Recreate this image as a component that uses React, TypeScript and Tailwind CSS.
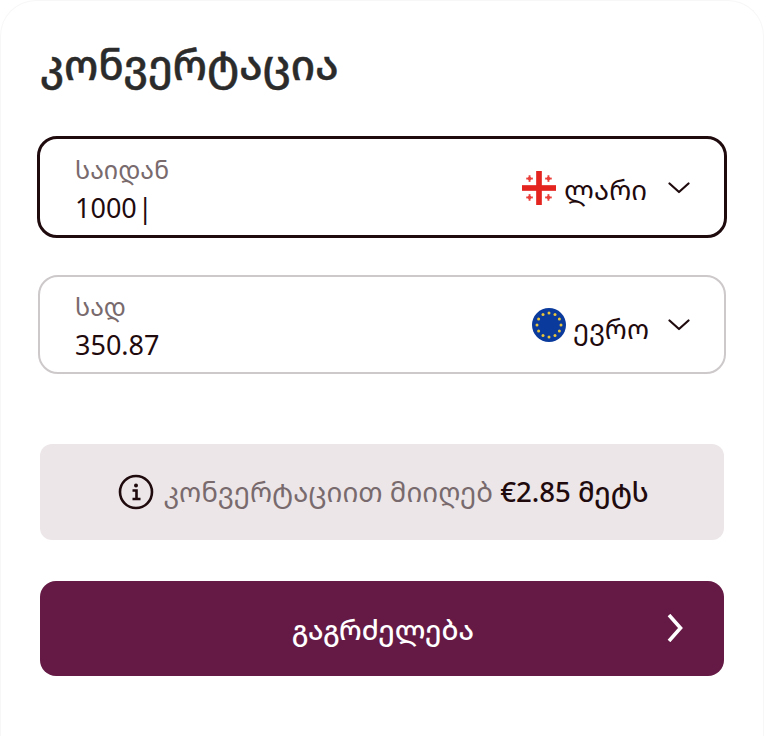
const font = "[font-family:'Noto_Sans','Noto_Sans_Georgian','DejaVu_Sans',sans-serif]";

function GeFlag() {
  return (
    <svg width="34" height="36" viewBox="0 0 36 38" className="shrink-0">
      <rect x="15" y="1" width="6" height="36" fill="#e3241f" />
      <rect x="0" y="16" width="36" height="6" fill="#e3241f" />
      {[[8, 9], [28, 9], [8, 29], [28, 29]].map(([x, y]) => (
        <g key={`${x}-${y}`} fill="#ea3f3a">
          <rect x={x - 1} y={y - 3.5} width="2" height="7" />
          <rect x={x - 3.5} y={y - 1} width="7" height="2" />
          <rect x={x - 1.5} y={y - 1.5} width="3" height="3" />
        </g>
      ))}
    </svg>
  );
}

function EuFlag() {
  const stars = Array.from({ length: 12 }, (_, i) => {
    const a = (i * Math.PI) / 6;
    return [17 + 12 * Math.sin(a), 17 - 12 * Math.cos(a)];
  });
  return (
    <svg width="34" height="34" viewBox="0 0 34 34" className="shrink-0">
      <circle cx="17" cy="17" r="17" fill="#0a3a9c" />
      {stars.map(([x, y], i) => (
        <circle key={i} cx={x} cy={y} r="1.5" fill="#e8c53a" />
      ))}
    </svg>
  );
}

function Chevron() {
  return (
    <svg width="22" height="12" viewBox="0 0 22 12" fill="none" className="shrink-0">
      <path d="M1.5 1.5 L11 10 L20.5 1.5" stroke="#1f0a0e" strokeWidth="2.2" strokeLinecap="round" strokeLinejoin="round" />
    </svg>
  );
}

export default function App() {
  return (
    <div className={`${font} w-[764px] h-[736px] bg-white rounded-t-[36px] border-t border-x border-[#f7f7f7] box-border px-[39px] overflow-hidden`}>
      <h1 className="text-[41.8px] leading-[46px] font-medium [-webkit-text-stroke:0.5px_#2b2b2b] text-[#2b2b2b] mt-[44px] -translate-y-[4px]">კონვერტაცია</h1>

      <div className="mt-[45px] -mx-[3px] h-[102px] rounded-[20px] border-[3px] border-[#1f0a0e] flex justify-between pl-[35px] pr-[34px]">
        <div className="flex flex-col pt-[13px]">
          <span className="text-[25px] leading-[34px] text-[#786a6d]">საიდან</span>
          <span className="text-[27px] leading-[38px] mt-[3px] text-[#1f0a0e]">1000<span className="ml-[1px]">|</span></span>
        </div>
        <div className="flex items-center gap-[8px] pt-[2px]">
          <GeFlag />
          <span className="text-[27.5px] leading-[36px] text-[#1f0a0e] mr-[13px] mt-[4px]">ლარი</span>
          <Chevron />
        </div>
      </div>

      <div className="mt-[37px] -mx-[2px] h-[99px] rounded-[20px] border-2 border-[#cdc8ca] flex justify-between pl-[35px] pr-[34px]">
        <div className="flex flex-col pt-[12px]">
          <span className="text-[25px] leading-[34px] text-[#786a6d]">სად</span>
          <span className="text-[27px] leading-[38px] mt-[3px] text-[#1f0a0e]">350.87</span>
        </div>
        <div className="flex items-center gap-[7px]">
          <EuFlag />
          <span className="text-[27.5px] leading-[36px] text-[#1f0a0e] mr-[12px] mt-[8px]">ევრო</span>
          <Chevron />
        </div>
      </div>

      <div className="mt-[70px] h-[96px] rounded-[12px] bg-[#ece6e8] flex items-center justify-center gap-[9px] pl-[3px]">
        <svg width="36" height="36" viewBox="0 0 36 36" fill="none" className="shrink-0">
          <circle cx="18" cy="18" r="16" stroke="#1f0a0e" strokeWidth="2.6" />
          <circle cx="18" cy="11.5" r="2" fill="#1f0a0e" />
          <path d="M14.5 16.5 H18.5 V24.5 M14.5 25 H22.5" stroke="#1f0a0e" strokeWidth="2.6" />
        </svg>
        <span className="text-[27.6px] leading-[36px] text-[#786a6d] -translate-y-px">
          კონვერტაციით მიიღებ <span className="text-[#1f0a0e] font-medium">€2.85 მეტს</span>
        </span>
      </div>

      <button className="mt-[41px] w-full h-[95px] rounded-[16px] bg-[#651a45] text-white flex items-center relative justify-center">
        <span className="text-[27.8px] leading-[36px] font-medium pl-[2px]">გაგრძელება</span>
        <svg width="18" height="28" viewBox="0 0 18 28" fill="none" className="absolute right-[40px] top-[33px]">
          <path d="M3 1 L14.5 14 L3 27" stroke="white" strokeWidth="3.6" />
        </svg>
      </button>
    </div>
  );
}
